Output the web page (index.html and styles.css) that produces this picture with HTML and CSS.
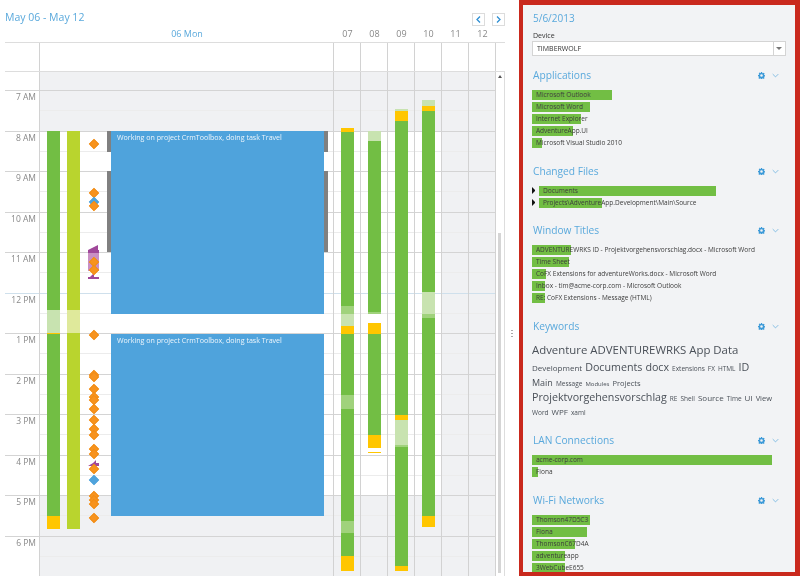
FILE: index.html
```html
<!DOCTYPE html>
<html lang="en">
<head>
    <meta charset="UTF-8">
    <title>Timeline</title>
    <link rel="stylesheet" href="styles.css">
</head>
<body>
    <svg class="defs" width="0" height="0">
        <symbol id="gear" viewBox="0 0 16 16">
            <path d="M6.600 0h2.800l.4 2.300 1.400.6 1.900-1.300 2 2-1.300 1.900.6 1.400 2.300.4v2.800l-2.300.4-.6 1.400 1.300 1.900-2 2-1.900-1.300-1.400.6-.4 2.300H6.600l-.4-2.300-1.400-.6-1.900 1.300-2-2 1.300-1.900-.6-1.400L0 9.400V6.600l2.300-.4.6-1.400L1.600 2.900l2-2 1.900 1.300 1.400-.6zM8 5a3 3 0 1 0 0 6 3 3 0 0 0 0-6z" fill="#3c9ad8" fill-rule="evenodd"/>
        </symbol>
        <symbol id="chevron" viewBox="0 0 10 6">
            <path d="M1 1l4 4 4-4" fill="none" stroke="#5aa9dc" stroke-width="1"/>
        </symbol>
    </svg>

    <div class="calendar">
        <div class="cal-top">
            <span class="range">May 06 - May 12</span>
            <div class="nav">
                <button class="nav-btn"><svg width="5" height="7" viewBox="0 0 5 7"><path d="M4 .5L1 3.500l3 3" fill="none" stroke="#2f8fd3" stroke-width="1.300"/></svg></button>
                <button class="nav-btn"><svg width="5" height="7" viewBox="0 0 5 7"><path d="M1 .5l3 3-3 3" fill="none" stroke="#2f8fd3" stroke-width="1.300"/></svg></button>
            </div>
        </div>

        <div class="day-heads days-cols">
            <span class="current">06 Mon</span><span>07</span><span>08</span><span>09</span><span>10</span><span>11</span><span>12</span>
        </div>

        <div class="all-day">
            <div class="days-cols all-day-cols">
                <div></div><div></div><div></div><div></div><div></div><div></div><div></div>
            </div>
        </div>

        <div class="cal-body">
            <div class="time-grid">
                <div class="hour off first"><span class="label"></span><div class="slot"></div></div>
                <div class="hour off long"><span class="label">7 AM</span><div class="slot"></div></div>
                <div class="hour"><span class="label">8 AM</span><div class="slot"></div></div>
                <div class="hour long"><span class="label">9 AM</span><div class="slot"></div></div>
                <div class="hour"><span class="label">10 AM</span><div class="slot"></div></div>
                <div class="hour long now"><span class="label">11 AM</span><div class="slot"></div></div>
                <div class="hour"><span class="label">12 PM</span><div class="slot"></div></div>
                <div class="hour long"><span class="label">1 PM</span><div class="slot"></div></div>
                <div class="hour"><span class="label">2 PM</span><div class="slot"></div></div>
                <div class="hour long"><span class="label">3 PM</span><div class="slot"></div></div>
                <div class="hour"><span class="label">4 PM</span><div class="slot"></div></div>
                <div class="hour off long"><span class="label">5 PM</span><div class="slot"></div></div>
                <div class="hour off"><span class="label">6 PM</span><div class="slot"></div></div>

                <div class="days-cols day-layer">
                    <div class="day">
                        <div class="bar" style="left:7px;top:59px">
                            <i class="g" style="height:179px"></i><i class="l" style="height:23px"></i><i class="y" style="height:1px"></i><i class="g" style="height:182px"></i><i class="y" style="height:13px"></i>
                        </div>
                        <div class="bar" style="left:27px;top:59px">
                            <i class="lime" style="height:179px"></i><i class="lime-l" style="height:23px"></i><i class="lime" style="height:196px"></i>
                        </div>

                        <i class="mark" style="top:72px"></i>
                        <i class="mark" style="top:121px"></i>
                        <i class="mark blue" style="top:130px"></i>
                        <i class="mark" style="top:134px"></i>
                        <svg class="flag" style="top:173px" width="12" height="34" viewBox="0 0 12 34">
                            <path d="M0 5L10 0v5z" fill="#a0489a"/>
                            <rect y="5" width="11" height="3" fill="#a0489a"/>
                            <rect y="8" width="11" height="18" fill="#c98fc4"/>
                            <path d="M2 32l4-4v4h5v2H0v-2z" fill="#a0489a"/>
                        </svg>
                        <i class="mark" style="top:190px"></i>
                        <i class="mark" style="top:198px"></i>
                        <i class="mark" style="top:263px"></i>
                        <i class="mark" style="top:303px"></i>
                        <i class="mark" style="top:305px"></i>
                        <i class="mark" style="top:317px"></i>
                        <i class="mark" style="top:325px"></i>
                        <i class="mark" style="top:328px"></i>
                        <i class="mark" style="top:337px"></i>
                        <i class="mark" style="top:348px"></i>
                        <i class="mark" style="top:357px"></i>
                        <i class="mark" style="top:363px"></i>
                        <i class="mark" style="top:377px"></i>
                        <i class="mark" style="top:382px"></i>
                        <svg class="flag" style="top:388px" width="12" height="7" viewBox="0 0 12 7">
                            <path d="M0 6l5-3 3-3v3h3v3z" fill="#a0489a"/>
                        </svg>
                        <i class="mark" style="top:397px"></i>
                        <i class="mark blue" style="top:408px"></i>
                        <i class="mark" style="top:424px"></i>
                        <i class="mark" style="top:428px"></i>
                        <i class="mark" style="top:432px"></i>
                        <i class="mark" style="top:446px"></i>

                        <div class="busy" style="left:67px;top:59px;height:21px"></div>
                        <div class="busy" style="left:67px;top:99px;height:81px"></div>
                        <div class="busy" style="left:284px;top:59px;height:21px"></div>
                        <div class="busy" style="left:284px;top:99px;height:81px"></div>

                        <div class="task" style="top:59px;height:183px">Working on project CrmToolbox, doing task Travel</div>
                        <div class="task" style="top:262px;height:182px">Working on project CrmToolbox, doing task Travel</div>
                    </div>
                    <div class="day">
                        <div class="bar" style="left:7px;top:56px">
                            <i class="y" style="height:4px"></i><i class="g" style="height:174px"></i><i class="m" style="height:8px"></i><i class="l" style="height:12px"></i><i class="y" style="height:8px"></i><i class="g" style="height:61px"></i><i class="m" style="height:14px"></i><i class="g" style="height:112px"></i><i class="m" style="height:12px"></i><i class="g" style="height:23px"></i><i class="y" style="height:15px"></i>
                        </div>
                    </div>
                    <div class="day">
                        <div class="bar" style="left:7px;top:59px">
                            <i class="l" style="height:10px"></i><i class="g" style="height:171px"></i><i class="m" style="height:2px"></i><i style="height:9px"></i><i class="y" style="height:11px"></i><i class="g" style="height:101px"></i><i class="y" style="height:13px"></i><i style="height:4px"></i><i class="y" style="height:1px"></i>
                        </div>
                    </div>
                    <div class="day">
                        <div class="bar" style="left:7px;top:37px">
                            <i class="l" style="height:2px"></i><i class="y" style="height:10px"></i><i class="g" style="height:294px"></i><i class="y" style="height:5px"></i><i class="l" style="height:25px"></i><i class="m" style="height:2px"></i><i class="g" style="height:119px"></i><i class="y" style="height:5px"></i>
                        </div>
                    </div>
                    <div class="day">
                        <div class="bar" style="left:7px;top:28px">
                            <i class="l" style="height:6px"></i><i class="y" style="height:5px"></i><i class="g" style="height:181px"></i><i class="l" style="height:22px"></i><i class="m" style="height:4px"></i><i class="g" style="height:198px"></i><i class="y" style="height:11px"></i>
                        </div>
                    </div>
                    <div class="day weekend"></div>
                    <div class="day weekend"></div>
                </div>
            </div>

            <div class="scrollbar">
                <span class="scroll-up"></span>
                <div class="scroll-thumb"></div>
            </div>
        </div>
    </div>

    <div class="splitter"><i></i><i></i><i></i></div>

    <div class="panel">
        <div class="panel-date">5/6/2013</div>
        <label class="field-label">Device</label>
        <div class="combo">
            <span class="combo-value">TIMBERWOLF</span>
            <span class="combo-arrow"></span>
        </div>

        <div class="section">
            <div class="section-head"><h2>Applications</h2><svg class="gear"><use href="#gear"/></svg><svg class="chev"><use href="#chevron"/></svg></div>
            <div class="row"><span class="fill" style="width:80px"></span><span class="row-text">Microsoft Outlook</span></div>
            <div class="row"><span class="fill" style="width:58px"></span><span class="row-text">Microsoft Word</span></div>
            <div class="row"><span class="fill" style="width:49px"></span><span class="row-text">Internet Explorer</span></div>
            <div class="row"><span class="fill" style="width:41px"></span><span class="row-text">AdventureApp.UI</span></div>
            <div class="row"><span class="fill" style="width:10px"></span><span class="row-text">Microsoft Visual Studio 2010</span></div>
        </div>

        <div class="section tree">
            <div class="section-head"><h2>Changed Files</h2><svg class="gear"><use href="#gear"/></svg><svg class="chev"><use href="#chevron"/></svg></div>
            <div class="tree-row"><span class="tree-arrow"></span><div class="row"><span class="fill" style="width:177px"></span><span class="row-text">Documents</span></div></div>
            <div class="tree-row"><span class="tree-arrow"></span><div class="row"><span class="fill" style="width:63px"></span><span class="row-text">Projects\AdventureApp.Development\Main\Source</span></div></div>
        </div>

        <div class="section">
            <div class="section-head"><h2>Window Titles</h2><svg class="gear"><use href="#gear"/></svg><svg class="chev"><use href="#chevron"/></svg></div>
            <div class="row"><span class="fill" style="width:39px"></span><span class="row-text">ADVENTUREWRKS ID - Projektvorgehensvorschlag.docx - Microsoft Word</span></div>
            <div class="row"><span class="fill" style="width:37px"></span><span class="row-text">Time Sheet</span></div>
            <div class="row"><span class="fill" style="width:14px"></span><span class="row-text">CoFX Extensions for adventureWorks.docx - Microsoft Word</span></div>
            <div class="row"><span class="fill" style="width:13px"></span><span class="row-text">Inbox - tim@acme-corp.com - Microsoft Outlook</span></div>
            <div class="row"><span class="fill" style="width:13px"></span><span class="row-text">RE: CoFX Extensions - Message (HTML)</span></div>
        </div>

        <div class="section">
            <div class="section-head"><h2>Keywords</h2><svg class="gear"><use href="#gear"/></svg><svg class="chev"><use href="#chevron"/></svg></div>
            <div class="cloud">
                <div class="cloud-line l1"><span class="t13">Adventure</span><span class="t13">ADVENTUREWRKS</span><span class="t13">App</span><span class="t13">Data</span></div>
                <div class="cloud-line l2"><span class="t9">Development</span><span class="t12">Documents</span><span class="t12">docx</span><span class="t7">Extensions</span><span class="t7">FX</span><span class="t7">HTML</span><span class="t12">ID</span></div>
                <div class="cloud-line l3"><span class="t10">Main</span><span class="t7">Message</span><span class="t6">Modules</span><span class="t8">Projects</span></div>
                <div class="cloud-line l4"><span class="t12">Projektvorgehensvorschlag</span><span class="t7">RE</span><span class="t7">Shell</span><span class="t9">Source</span><span class="t7">Time</span><span class="t9">UI</span><span class="t8">View</span></div>
                <div class="cloud-line l5"><span class="t7">Word</span><span class="t9">WPF</span><span class="t7">xaml</span></div>
            </div>
        </div>

        <div class="section">
            <div class="section-head"><h2>LAN Connections</h2><svg class="gear"><use href="#gear"/></svg><svg class="chev"><use href="#chevron"/></svg></div>
            <div class="row"><span class="fill" style="width:240px"></span><span class="row-text">acme-corp.com</span></div>
            <div class="row"><span class="fill" style="width:6px"></span><span class="row-text">Fiona</span></div>
        </div>

        <div class="section">
            <div class="section-head"><h2>Wi-Fi Networks</h2><svg class="gear"><use href="#gear"/></svg><svg class="chev"><use href="#chevron"/></svg></div>
            <div class="row"><span class="fill" style="width:58px"></span><span class="row-text">Thomson47D5C3</span></div>
            <div class="row"><span class="fill" style="width:55px"></span><span class="row-text">Fiona</span></div>
            <div class="row"><span class="fill" style="width:43px"></span><span class="row-text">ThomsonC67D4A</span></div>
            <div class="row"><span class="fill" style="width:33px"></span><span class="row-text">adventureapp</span></div>
            <div class="row"><span class="fill" style="width:33px"></span><span class="row-text">3WebCubeE655</span></div>
        </div>
    </div>
</body>
</html>
```

FILE: styles.css
```css
* {
    box-sizing: border-box;
}

body {
    margin: 0;
    width: 800px;
    height: 576px;
    overflow: hidden;
    display: flex;
    background-color: #fff;
    font-family: "Open Sans", "Noto Sans", sans-serif;
    color: #444;
}

.defs {
    position: absolute;
}

/* calendar side */
.calendar {
    width: 500px;
    height: 576px;
    margin-left: 5px;
    flex: none;
}

.cal-top {
    height: 27px;
    display: flex;
    justify-content: space-between;
    align-items: flex-end;
}

.range {
    font-size: 10.5px;
    line-height: 17px;
    margin-bottom: 1px;
    color: #5aa9dc;
}

.nav {
    display: flex;
    gap: 7px;
    margin-bottom: 1px;
}

.nav-btn {
    width: 13px;
    height: 13px;
    padding: 0;
    display: flex;
    align-items: center;
    justify-content: center;
    background-color: #fff;
    border: 1px solid #dcdcdc;
}

.days-cols {
    display: grid;
    grid-template-columns: 294px repeat(6, 27px);
    padding-left: 35px;
}

.day-heads {
    height: 16px;
    border-bottom: 1px solid #ddd;
    font-size: 9px;
    line-height: 14px;
    text-align: center;
    color: #888;
}

.day-heads .current {
    color: #5aa9dc;
}

.all-day {
    height: 29px;
    border-bottom: 1px solid #ddd;
}

.all-day-cols {
    height: 28px;
}

.all-day-cols div {
    border-right: 1px solid #d2d2d2;
}

.all-day-cols div:first-child {
    box-shadow: -1px 0 0 #d2d2d2;
}

.cal-body {
    display: flex;
    height: 504px;
}

.time-grid {
    position: relative;
    width: 491px;
    flex: none;
}

.hour {
    display: flex;
    height: 40px;
    border-bottom: 1px solid #d4d4d4;
}

.hour.long {
    height: 41px;
}

.hour.first {
    height: 19px;
}

.hour.now {
    border-bottom-color: #cfe0ec;
}

.label {
    width: 34px;
    flex: none;
    padding-right: 3px;
    text-align: right;
    font-size: 8.5px;
    line-height: 12px;
    color: #888;
    white-space: nowrap;
    overflow: hidden;
}

.slot {
    flex: 1;
    background: linear-gradient(#ececec, #ececec) 0 19px / 100% 1px no-repeat;
}

.hour.off .slot {
    background-color: #f0f1f3;
}

.day-layer {
    position: absolute;
    left: 0;
    top: 0;
    bottom: 0;
    width: 491px;
}

.day {
    position: relative;
    border-right: 1px solid #d2d2d2;
}

.day:first-child {
    box-shadow: -1px 0 0 #d2d2d2;
}

/* darken so the off-hours rows and the grid lines stay as they are */
.day.weekend {
    background-color: #f0f1f3;
    mix-blend-mode: darken;
}

.bar {
    position: absolute;
    width: 13px;
    display: flex;
    flex-direction: column;
}

.bar i {
    display: block;
    flex: none;
}

.bar .g { background-color: #72be44; }
.bar .m { background-color: #a0d27c; }
.bar .l { background-color: #c8e3b0; }
.bar .y { background-color: #ffc600; }
.bar .lime { background-color: #b9d42e; }
.bar .lime-l { background-color: #dfe99b; }

.mark {
    position: absolute;
    left: 49.500px;
    width: 8px;
    height: 8px;
    margin-top: -4px;
    transform: rotate(45deg) scale(.92);
    background-color: #f7931e;
    border: 1px solid #ef8a10;
}

.mark.blue {
    background-color: #4fa3dc;
    border-color: #4fa3dc;
}

.flag {
    position: absolute;
    left: 48px;
}

.busy {
    position: absolute;
    width: 4px;
    background-color: #808080;
}

.task {
    position: absolute;
    left: 71px;
    width: 213px;
    padding: 1px 6px;
    background-color: #4fa3dc;
    color: #eef6fc;
    font-size: 7.100px;
    line-height: 11px;
    white-space: nowrap;
}

.scrollbar {
    position: relative;
    width: 9px;
    flex: none;
    border-right: 1px solid #ddd;
}

.scroll-up {
    position: absolute;
    left: 2px;
    top: 3px;
    border: 2px solid transparent;
    border-top: 0;
    border-bottom: 3px solid #555;
}

.scroll-thumb {
    position: absolute;
    left: 2px;
    top: 161px;
    width: 3px;
    height: 340px;
    background-color: #d5d5d5;
}

.splitter {
    width: 14px;
    flex: none;
    display: flex;
    flex-direction: column;
    align-items: center;
    gap: 2px;
    padding-top: 330px;
}

.splitter i {
    width: 2px;
    height: 1px;
    background-color: #aaa;
}

/* right panel */
.panel {
    flex: 1;
    height: 576px;
    overflow: hidden;
    background-color: #f2f3f5;
    border-style: solid;
    border-color: #c9291d;
    border-width: 5px 5px 4px 4px;
    padding: 5px 9px 0 9px;
}

.panel-date {
    height: 16px;
    font-size: 10px;
    line-height: 16px;
    color: #5aa9dc;
    padding-left: 1px;
}

.field-label {
    display: block;
    margin-top: 5px;
    height: 10px;
    font-size: 7px;
    line-height: 10px;
    color: #333;
    padding-left: 1px;
}

.combo {
    display: flex;
    height: 15px;
    background-color: #fff;
    border: 1px solid #d4d4d4;
    margin-bottom: 10px;
}

.combo-value {
    flex: 1;
    padding-left: 4px;
    font-size: 7px;
    line-height: 13px;
    color: #333;
}

.combo-arrow {
    width: 12px;
    border-left: 1px solid #d4d4d4;
    position: relative;
}

.combo-arrow::after {
    content: "";
    position: absolute;
    left: 2px;
    top: 5px;
    border: 3px solid transparent;
    border-bottom: 0;
    border-top: 3px solid #777;
}

.section {
    margin-bottom: 12px;
}

.section.tree {
    margin-bottom: 11px;
}

.section-head {
    display: flex;
    align-items: center;
    height: 18px;
    margin-bottom: 6px;
    padding-left: 1px;
}

.section-head h2 {
    flex: 1;
    margin: 0;
    font-size: 10.200px;
    font-weight: 400;
    color: #5aa9dc;
}

.gear {
    width: 7px;
    height: 7px;
    margin-right: 7px;
}

.chev {
    width: 7px;
    height: 5px;
    margin-right: 7px;
}

.row {
    position: relative;
    height: 12px;
    flex: 1;
}

.fill {
    position: absolute;
    left: 0;
    top: 0;
    height: 10px;
    background-color: #72be44;
}

.row-text {
    position: relative;
    display: block;
    padding-left: 4px;
    font-size: 6.500px;
    line-height: 10px;
    color: #3c3c3c;
    white-space: nowrap;
}

.tree-row {
    display: flex;
    height: 12px;
}

.tree-arrow {
    width: 7px;
    height: 7px;
    flex: none;
    margin-top: 1px;
    border: 3px solid transparent;
    border-left: 3px solid #111;
    border-right: 0;
}

.cloud {
    height: 78px;
    color: #4a5058;
}

.cloud-line {
    display: flex;
    align-items: baseline;
    gap: 3px;
    white-space: nowrap;
}

.l1 { height: 18px; line-height: 18px; }
.l2 { height: 16px; line-height: 16px; }
.l3 { height: 15px; line-height: 15px; }
.l4 { height: 15px; line-height: 15px; }
.l5 { height: 14px; line-height: 14px; }

.t6 { font-size: 6px; }
.t7 { font-size: 6.500px; }
.t8 { font-size: 7.500px; }
.t9 { font-size: 8px; }
.t10 { font-size: 9px; }
.t12 { font-size: 10.700px; }
.t13 { font-size: 11.400px; }
```
